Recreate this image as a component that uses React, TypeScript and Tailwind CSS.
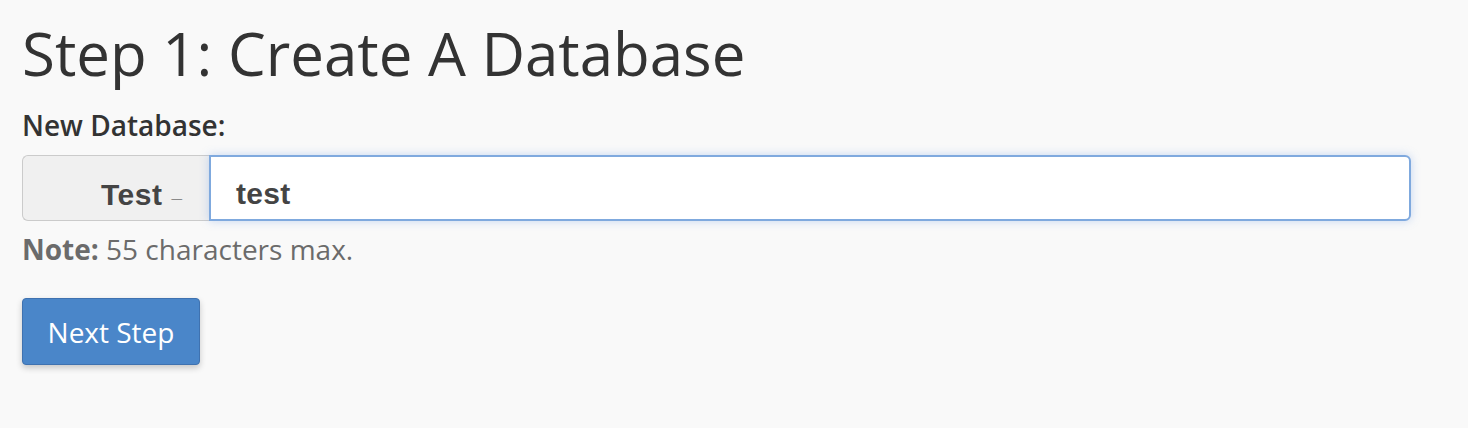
import React from "react";

export default function App() {
  return (
    <div className="min-h-[428px] w-full bg-[#f9f9f9] pl-[22px] pr-[57px] text-[#333] [font-family:'Open_Sans',sans-serif]">
      <h1 className="pt-[23px] text-[60px] font-normal leading-none">Step 1: Create A Database</h1>
      <label className="mt-[28px] block text-[28px] font-semibold leading-none">New Database:</label>
      <div className="mt-[16px] flex h-[66px] w-full">
        <div className="flex w-[187px] items-center justify-end rounded-l-[6px] border border-r-0 border-[#cbcbcb] bg-[#f0f0f0] pr-[27px] pt-[13px] text-[#444] [font-family:'Liberation_Sans',Arial,sans-serif]">
          <span className="text-[30px] font-bold leading-none tracking-[0.5px]">Test</span>
          <span className="relative -top-[3px] ml-[9px] text-[19px] font-bold leading-none text-[#3a3a3a]">_</span>
        </div>
        <div className="flex flex-1 items-center rounded-r-[6px] border-2 border-[#7fa9de] bg-white pl-[25px] pt-[12px] shadow-[0_0_10px_rgba(102,153,230,0.35)]">
          <span className="text-[30px] font-bold leading-none tracking-[0.3px] text-[#444] [font-family:'Liberation_Sans',Arial,sans-serif]">test</span>
        </div>
      </div>
      <p className="mt-[14px] text-[28px] leading-none text-[#6b6b6b]">
        <span className="font-bold">Note:</span> 55 characters max.
      </p>
      <button className="mt-[35px] flex h-[67px] w-[178px] items-center justify-center rounded-[4px] border border-[#3f72b0] bg-[#4a86c9] text-[28px] leading-none text-white shadow-[0_3px_6px_rgba(0,0,0,0.2)]">
        Next Step
      </button>
    </div>
  );
}
